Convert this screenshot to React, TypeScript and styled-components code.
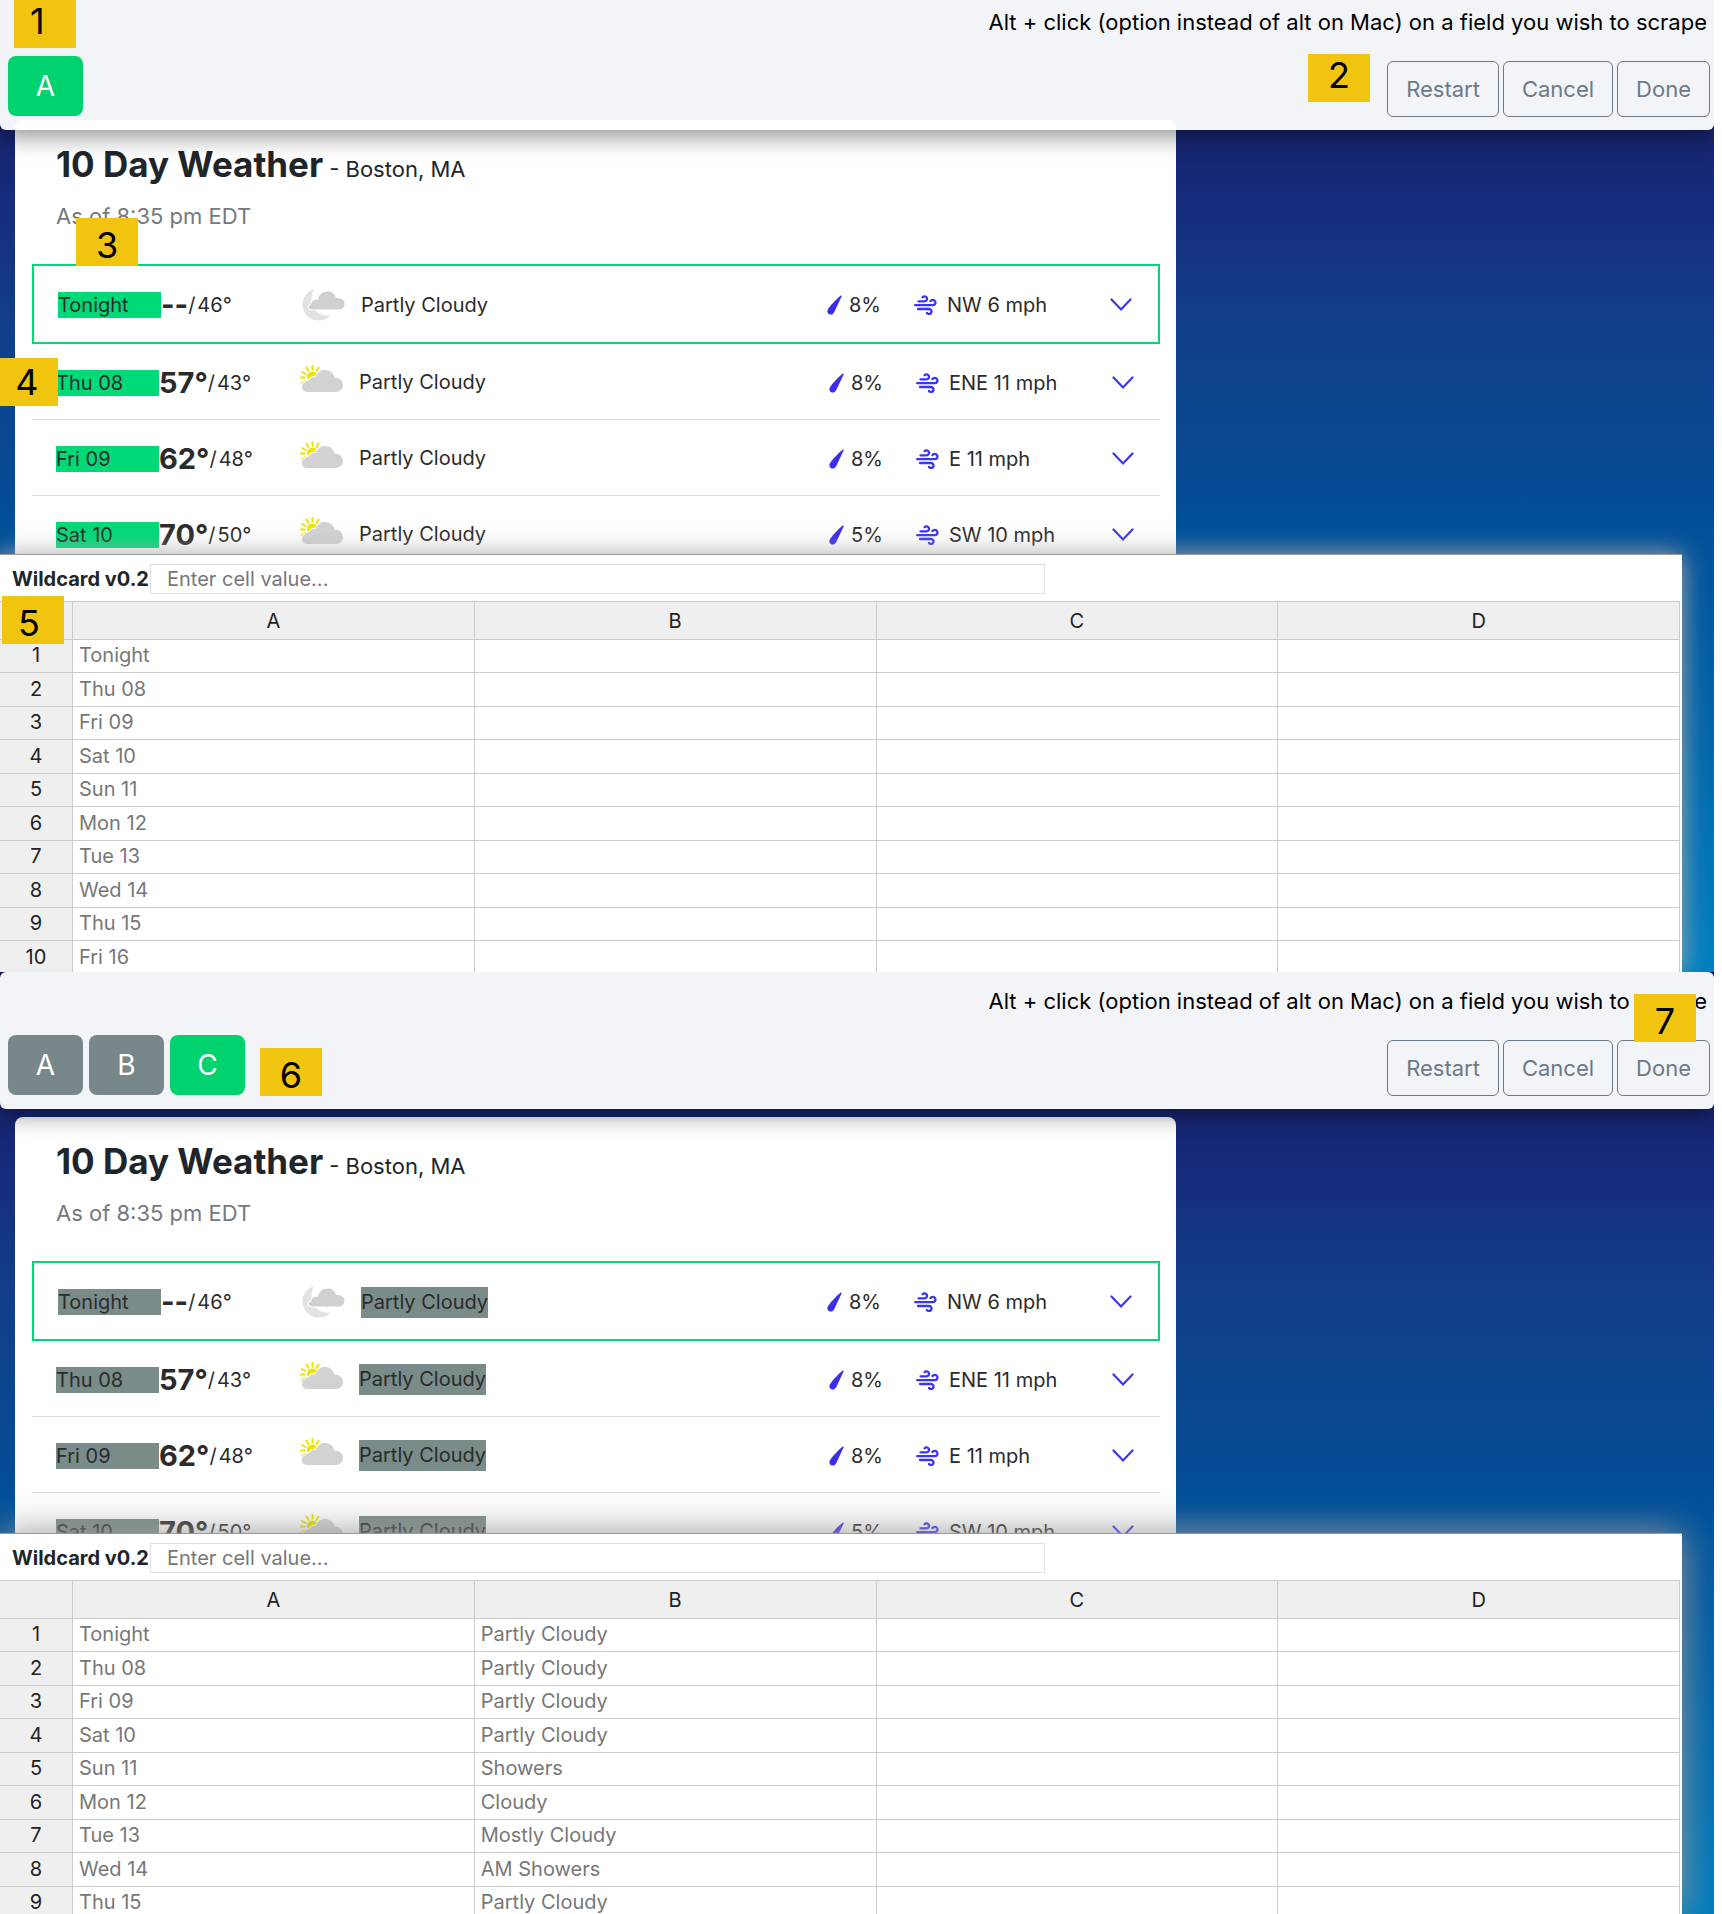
import React from "react";
import styled, { createGlobalStyle, css } from "styled-components";

const GlobalStyle = createGlobalStyle`
  *, *::before, *::after { box-sizing: border-box; }
  body {
    margin: 0;
    background: #fff;
    color: #2b2b2b;
    font-family: Inter, "Liberation Sans", sans-serif;
  }
  button, input { font: inherit; }
`;

const GREEN = "#00d26f";
const SLATE = "#78888a";

type Tone = "green" | "slate";
const toneColor = (tone: Tone) => (tone === "green" ? GREEN : SLATE);

/* ---------- page frame ---------- */

const Page = styled.main`
  margin-right: 8px;
`;

const Screen = styled.section`
  position: relative;
  overflow: clip;
  background: linear-gradient(
    180deg,
    #150f60 0,
    #18246f 130px,
    #162c7c 200px,
    #123e88 320px,
    #00529a 550px,
    #0080c0 972px
  );
`;

const Badge = styled.span<{
  $x: number;
  $y: number;
  $align?: "start";
  $valign?: "start" | "end";
}>`
  position: absolute;
  z-index: 5;
  left: ${(p) => p.$x}px;
  top: ${(p) => p.$y}px;
  width: 62px;
  height: 48px;
  padding: 0 16px;
  display: flex;
  align-items: ${(p) => p.$valign ?? "center"};
  justify-content: ${(p) => p.$align ?? "center"};
  background: #f1c40f;
  color: #000;
  font-size: 36px;
  line-height: 42px;
`;

const BadgeRight = styled(Badge)`
  left: auto;
  right: ${(p) => p.$x}px;
`;

/* ---------- toolbar ---------- */

const Toolbar = styled.header<{ $roomy: boolean }>`
  position: relative;
  z-index: 2;
  display: flex;
  flex-direction: column;
  padding: ${(p) => (p.$roomy ? "15px 4px 13px 8px" : "8px 4px 13px 8px")};
  gap: 20px;
  background: #f3f4f8;
  border-radius: ${(p) => (p.$roomy ? "6px" : "0 0 6px 6px")};
  box-shadow: 0 8px 24px -2px rgba(0, 0, 0, 0.45);
`;

const CardLip = styled.div`
  position: absolute;
  left: 15px;
  bottom: 0;
  width: 1161px;
  max-width: calc(100% - 30px);
  height: 10px;
  border-radius: 8px 8px 0 0;
  background: #fff;
`;

const Hint = styled.p`
  margin: 0;
  padding-right: 3px;
  text-align: right;
  color: #000;
  font-size: 22px;
  line-height: 28px;
`;

const ToolRow = styled.div`
  display: flex;
  justify-content: space-between;
  height: 61px;
`;

const ButtonGroup = styled.div<{ $gap: number; $align: "start" | "end" }>`
  display: flex;
  align-items: ${(p) => p.$align};
  gap: ${(p) => p.$gap}px;
`;

const ColumnButton = styled.button<{ $tone: Tone }>`
  width: 75px;
  height: 60px;
  border: 0;
  border-radius: 8px;
  background: ${(p) => toneColor(p.$tone)};
  color: #fff;
  font-size: 28px;
  line-height: 36px;
`;

const OutlineButton = styled.button`
  height: 56px;
  padding: 0 18px;
  border: 1px solid #6c7a87;
  border-radius: 6px;
  background: transparent;
  color: #6c7a87;
  font-size: 22px;
  line-height: 28px;
`;

/* ---------- weather card ---------- */

const Viewport = styled.div<{ $height: number; $tucked: boolean }>`
  height: ${(p) => p.$height}px;
  padding-top: ${(p) => (p.$tucked ? 0 : 8)}px;
  overflow: hidden;
`;

const Card = styled.article<{ $tucked: boolean }>`
  width: 1161px;
  max-width: calc(100% - 30px);
  margin-left: 15px;
  margin-top: ${(p) => (p.$tucked ? -10 : 0)}px;
  padding: 22px 16px 0 17px;
  background: #fff;
  border-radius: 8px;
`;

const CardHead = styled.div`
  height: 122px;
  padding-left: 24px;
`;

const Title = styled.h1`
  display: flex;
  align-items: baseline;
  gap: 6px;
  margin: 0;
  color: #202529;
  font-size: 35px;
  line-height: 44px;
  font-weight: 700;
`;

const Place = styled.span`
  font-size: 22px;
  font-weight: 400;
`;

const AsOf = styled.p`
  margin: 10px 0 0;
  color: #76797c;
  font-size: 22px;
  line-height: 30px;
`;

const Forecast = styled.ul`
  margin: 0;
  padding: 0;
  list-style: none;
`;

const ForecastRow = styled.li<{ $selected: boolean }>`
  display: grid;
  grid-template-columns: 103px 141px 59px 1fr 87px 196px 24px;
  align-items: center;
  height: 76px;
  padding: 2px 24px 0;
  border-bottom: 1px solid #dedede;
  font-size: 20px;
  line-height: 26px;
  ${(p) =>
    p.$selected &&
    css`
      height: 80px;
      border: 2px solid #00d977;
    `}
`;

const mark = (tone?: Tone) =>
  tone ? (tone === "green" ? "#00d977" : "#7a8c89") : "transparent";

const Day = styled.span<{ $mark?: Tone }>`
  background: ${(p) => mark(p.$mark)};
`;

const Temps = styled.span`
  display: flex;
  align-items: center;
  white-space: nowrap;
`;

const High = styled.strong`
  font-size: 29px;
  line-height: 32px;
  font-weight: 700;
`;

const Low = styled.span`
  margin-left: 2px;
`;

const Condition = styled.span<{ $mark?: Tone }>`
  justify-self: start;
  line-height: 31px;
  background: ${(p) => mark(p.$mark)};
`;

const Reading = styled.span<{ $gap: number }>`
  display: flex;
  align-items: center;
  gap: ${(p) => p.$gap}px;
`;

const ExpandButton = styled.button`
  display: flex;
  padding: 0;
  border: 0;
  background: none;
`;

/* ---------- spreadsheet ---------- */

const Sheet = styled.div<{ $deep: boolean }>`
  position: relative;
  z-index: 1;
  margin-right: 32px;
  background: #fff;
  box-shadow: ${(p) => (p.$deep ? "0 0 36px #999" : "0 0 24px #aaa")};
`;

const SheetScroll = styled.div<{ $height: number }>`
  height: ${(p) => p.$height}px;
  overflow: hidden;
  border-top: 1px solid #999;
  padding-right: 2px;
`;

const FormulaBar = styled.div`
  display: flex;
  align-items: center;
  height: 46px;
  padding: 2px 0 0 12px;
`;

const Brand = styled.label`
  width: 138px;
  white-space: nowrap;
  color: #202529;
  font-size: 20px;
  line-height: 28px;
  font-weight: 700;
`;

const FormulaInput = styled.input`
  width: calc(54% - 6px);
  height: 30px;
  padding: 0 16px;
  border: 1px solid #e0e0e0;
  background: #fff;
  color: #777;
  font-size: 20px;
  &::placeholder { color: #777; opacity: 1; }
`;

const Grid = styled.table`
  width: 100%;
  table-layout: fixed;
  border-collapse: separate;
  border-spacing: 0;
  border-top: 1px solid #ccc;
`;

const HeadCell = styled.th`
  height: 38px;
  padding: 0;
  border-right: 1px solid #ccc;
  border-bottom: 1px solid #ccc;
  background: #efefef;
  color: #222;
  font-size: 20px;
  line-height: 28px;
  font-weight: 400;
`;

const IndexHead = styled(HeadCell)`
  width: 73px;
`;

const GridRow = styled.tr`
  height: 33px;
  &:nth-child(even) { height: 34px; }
`;

const IndexCell = styled(HeadCell)`
  height: auto;
  padding-bottom: 2px;
`;

const Cell = styled.td`
  padding: 0 6px 2px;
  border-right: 1px solid #ccc;
  border-bottom: 1px solid #ccc;
  background: #fff;
  color: #777;
  font-size: 20px;
  line-height: 28px;
`;

/* ---------- icons ---------- */

const CLOUD =
  "M6 27 A5 5 0 0 1 5 17.500 C6 16 7.500 15.500 9 15.500 C10.500 12.500 13 11.500 15.500 12 C17.500 7.500 20.500 5 25 5 C30 5 33.500 8 34.500 12.500 C39.500 12.500 43 15.500 43 20 C43 24 40 27 36 27 Z";

const SunCloud = () => (
  <svg width="44" height="36" viewBox="0 0 44 36" aria-hidden="true">
    <g stroke="#ece400" strokeWidth="2" strokeLinecap="round">
      <path d="M12.500 .8v4M6.500 2.500l2 3.500M2 7l3.600 2M.8 12.500h4M2 18l3.400-2M18.500 2.500l-2 3.500M22 6.500l-2.500 1.500" />
    </g>
    <circle cx="12.500" cy="12" r="5.500" fill="#ece400" />
    <path d={CLOUD} fill="#d2d2d2" stroke="#fff" strokeWidth="2" paintOrder="stroke" />
  </svg>
);

const MoonCloud = () => (
  <svg width="44" height="34" viewBox="0 0 44 34" aria-hidden="true">
    <path
      d="M12 1 C4 4 .5 10 .5 16.500 C.5 25.500 7.500 32.500 16.500 32.500 C21.500 32.500 25.500 31 28.500 27.500 C16.500 29 8.500 20 9.500 9.500 C9.800 6.500 10.500 3.500 12 1 Z"
      fill="#e2e2e2"
    />
    <path
      d="M10 21.500 C6 21.500 6 17 9.500 16.500 C9 13 13 10.500 16 12 C17 6.500 20.500 3.500 25.500 3.500 C30 3.500 33 6 34 10 C39 9.500 42.500 12 42.500 16 C42.500 19.500 40 21.500 36.500 21.500 Z"
      fill="#d0d0d0"
      stroke="#fff"
      strokeWidth="2"
      paintOrder="stroke"
    />
  </svg>
);

const Drop = () => (
  <svg width="15" height="20" viewBox="0 0 15 20" aria-hidden="true">
    <path
      d="M13.800 .5 C14.400 .2 15 .6 14.700 1.300 L7.300 17 C6.200 19.300 4 20.100 2.200 19.200 C.4 18.300 -.2 16 1.100 14 C4.500 9 9 4.500 13.800 .5 Z"
      fill="#3a2eea"
    />
  </svg>
);

const Wind = () => (
  <svg
    width="23"
    height="20"
    viewBox="0 0 23 20"
    fill="none"
    stroke="#3a36ee"
    strokeWidth="2.300"
    strokeLinecap="round"
    aria-hidden="true"
  >
    <path d="M4.500 6.300H10.500A2.500 2.500 0 1 0 8.600 2.200" />
    <path d="M1.200 10.200H18.800A2.700 2.700 0 1 0 16.500 6" />
    <path d="M4 14H15A2.500 2.500 0 1 1 13 18" />
  </svg>
);

const Chevron = () => (
  <svg width="22" height="14" viewBox="0 0 22 14" fill="none" aria-hidden="true">
    <path d="M1.500 1.500 11 11.500 20.500 1.500" stroke="#3a36ee" strokeWidth="2.200" strokeLinecap="round" />
  </svg>
);

/* ---------- data ---------- */

const FORECAST = [
  { day: "Tonight", high: "--", low: "46°", rain: "8%", wind: "NW 6 mph", night: true },
  { day: "Thu 08", high: "57°", low: "43°", rain: "8%", wind: "ENE 11 mph" },
  { day: "Fri 09", high: "62°", low: "48°", rain: "8%", wind: "E 11 mph" },
  { day: "Sat 10", high: "70°", low: "50°", rain: "5%", wind: "SW 10 mph" },
];

const DAYS = ["Tonight", "Thu 08", "Fri 09", "Sat 10", "Sun 11", "Mon 12", "Tue 13", "Wed 14", "Thu 15", "Fri 16"];
const CONDITIONS = [
  "Partly Cloudy",
  "Partly Cloudy",
  "Partly Cloudy",
  "Partly Cloudy",
  "Showers",
  "Cloudy",
  "Mostly Cloudy",
  "AM Showers",
  "Partly Cloudy",
];
const LETTERS = ["A", "B", "C", "D"];

/* ---------- sections ---------- */

type ScraperProps = {
  id: string;
  columns: { letter: string; tone: Tone }[];
  tucked: boolean;
  dayMark: Tone;
  conditionMark?: Tone;
  viewHeight: number;
  sheetHeight: number;
  rows: string[][];
  children: React.ReactNode;
};

const Scraper = (p: ScraperProps) => (
  <Screen>
    <Toolbar $roomy={!p.tucked}>
      {p.tucked && <CardLip />}
      <Hint>Alt + click (option instead of alt on Mac) on a field you wish to scrape</Hint>
      <ToolRow>
        <ButtonGroup $gap={6} $align="start">
          {p.columns.map((c) => (
            <ColumnButton key={c.letter} type="button" $tone={c.tone}>
              {c.letter}
            </ColumnButton>
          ))}
        </ButtonGroup>
        <ButtonGroup $gap={4} $align="end">
          <OutlineButton type="button">Restart</OutlineButton>
          <OutlineButton type="button">Cancel</OutlineButton>
          <OutlineButton type="button">Done</OutlineButton>
        </ButtonGroup>
      </ToolRow>
    </Toolbar>

    <Viewport $height={p.viewHeight} $tucked={p.tucked}>
      <Card $tucked={p.tucked}>
        <CardHead>
          <Title>
            10 Day Weather <Place>- Boston, MA</Place>
          </Title>
          <AsOf>As of 8:35 pm EDT</AsOf>
        </CardHead>
        <Forecast>
          {FORECAST.map((f) => (
            <ForecastRow key={f.day} $selected={!!f.night}>
              <Day $mark={p.dayMark}>{f.day}</Day>
              <Temps>
                <High>{f.high}</High>/<Low>{f.low}</Low>
              </Temps>
              {f.night ? <MoonCloud /> : <SunCloud />}
              <Condition $mark={p.conditionMark}>Partly Cloudy</Condition>
              <Reading $gap={7}>
                <Drop />
                {f.rain}
              </Reading>
              <Reading $gap={10}>
                <Wind />
                {f.wind}
              </Reading>
              <ExpandButton type="button" aria-label={`Show details for ${f.day}`}>
                <Chevron />
              </ExpandButton>
            </ForecastRow>
          ))}
        </Forecast>
      </Card>
    </Viewport>

    <Sheet $deep={!p.tucked}>
      <SheetScroll $height={p.sheetHeight}>
        <FormulaBar>
          <Brand htmlFor={p.id}>Wildcard v0.2</Brand>
          <FormulaInput id={p.id} type="text" placeholder="Enter cell value..." />
        </FormulaBar>
        <Grid>
          <thead>
            <tr>
              <IndexHead />
              {LETTERS.map((l) => (
                <HeadCell key={l} scope="col">
                  {l}
                </HeadCell>
              ))}
            </tr>
          </thead>
          <tbody>
            {p.rows.map((row, i) => (
              <GridRow key={i}>
                <IndexCell scope="row">{i + 1}</IndexCell>
                {LETTERS.map((l, c) => (
                  <Cell key={l}>{row[c]}</Cell>
                ))}
              </GridRow>
            ))}
          </tbody>
        </Grid>
      </SheetScroll>
    </Sheet>
    {p.children}
  </Screen>
);

export default function App() {
  return (
    <>
      <GlobalStyle />
      <Page>
        <Scraper
          id="cell-value-first"
          columns={[{ letter: "A", tone: "green" }]}
          tucked
          dayMark="green"
          viewHeight={424}
          sheetHeight={418}
          rows={DAYS.map((d) => [d])}
        >
          <Badge $x={14} $y={0} $align="start" $valign="start">1</Badge>
          <BadgeRight $x={344} $y={54} $valign="start">2</BadgeRight>
          <Badge $x={76} $y={218} $valign="end">3</Badge>
          <Badge $x={-4} $y={358}>4</Badge>
          <Badge $x={2} $y={596} $align="start" $valign="end">5</Badge>
        </Scraper>
        <Scraper
          id="cell-value-second"
          columns={[
            { letter: "A", tone: "slate" },
            { letter: "B", tone: "slate" },
            { letter: "C", tone: "green" },
          ]}
          tucked={false}
          dayMark="slate"
          conditionMark="slate"
          viewHeight={424}
          sheetHeight={381}
          rows={CONDITIONS.map((c, i) => [DAYS[i], c])}
        >
          <Badge $x={260} $y={76} $valign="end">6</Badge>
          <BadgeRight $x={18} $y={22} $valign="end">7</BadgeRight>
        </Scraper>
      </Page>
    </>
  );
}
